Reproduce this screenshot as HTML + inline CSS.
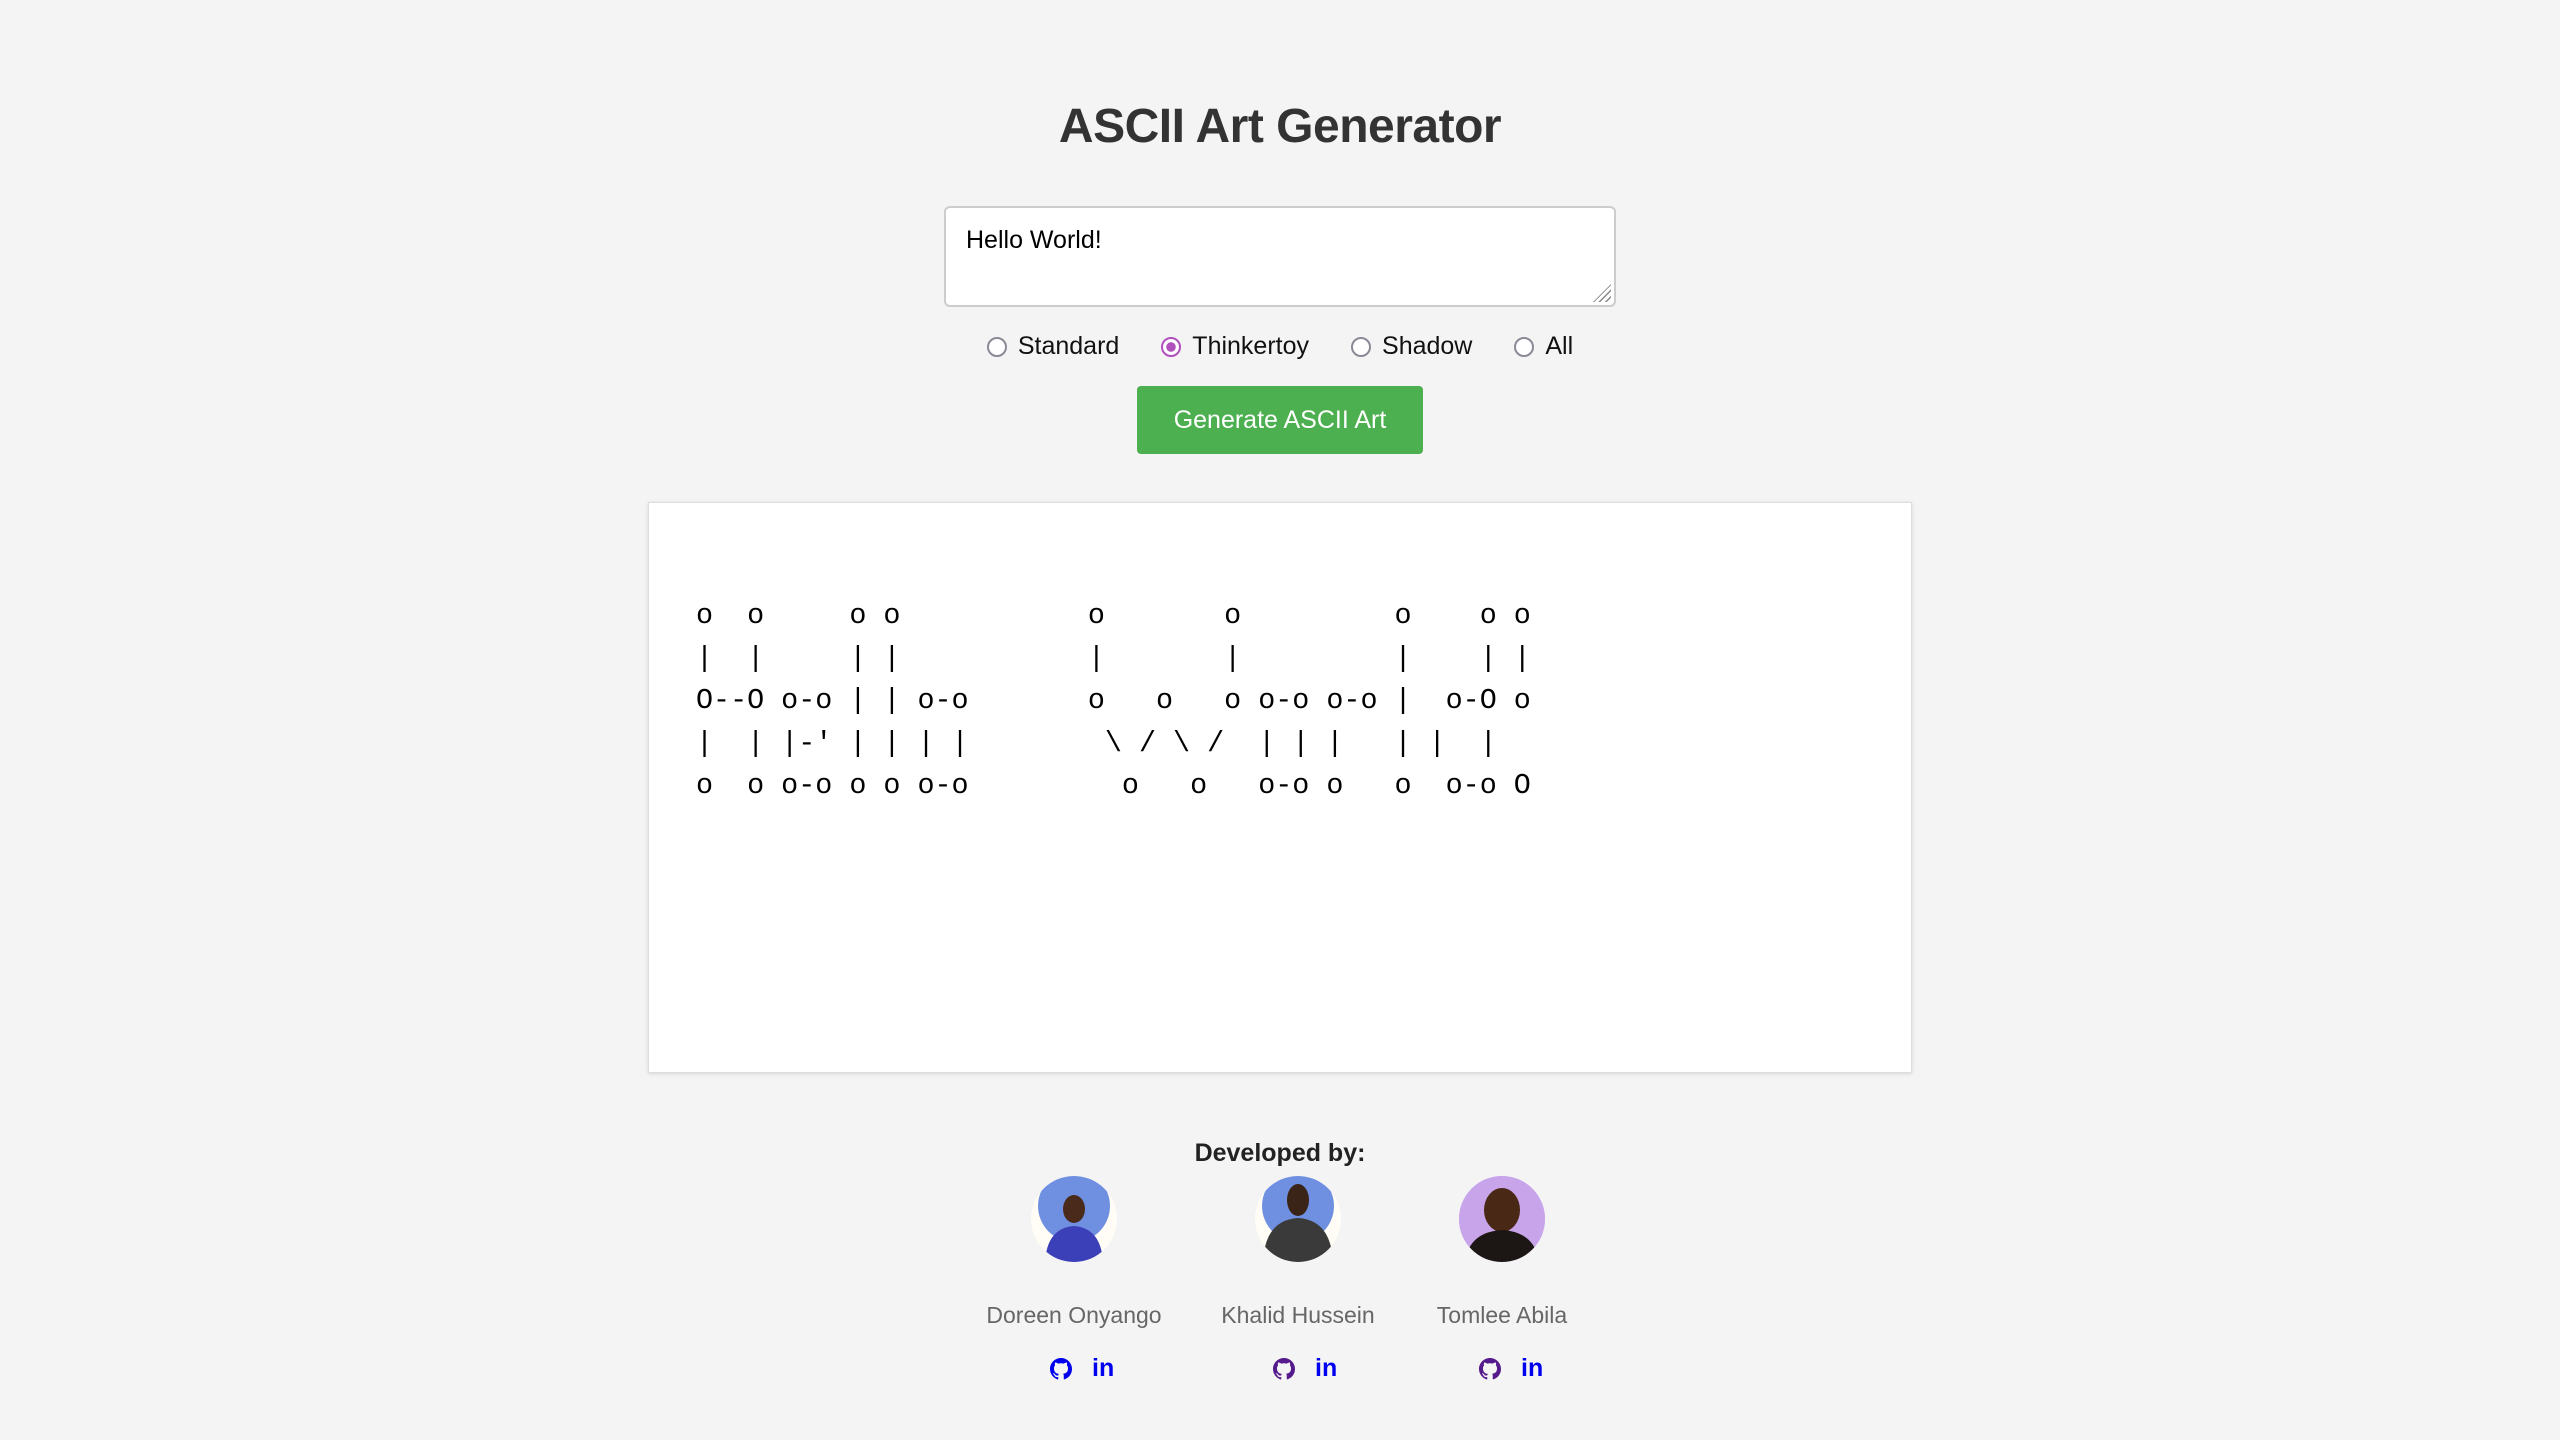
<!DOCTYPE html>
<html><head><meta charset="utf-8"><style>
*{box-sizing:border-box;margin:0;padding:0}
body{width:2560px;height:1440px;background:#f4f4f4;font-family:"Liberation Sans",sans-serif;position:relative;overflow:hidden;color:#333}
.abs{position:absolute}
h1{position:absolute;left:0;width:2560px;top:99px;text-align:center;font-size:48px;font-weight:bold;color:#333;letter-spacing:-0.5px}
.ta{left:944px;top:206px;width:672px;height:101px;background:#fff;border:2px solid #ccc;border-radius:6px;padding:18px 20px;font-size:25px;color:#000}
.grip{right:3px;bottom:3px;width:18px;height:18px;background:repeating-linear-gradient(135deg,transparent 0 3px,#888 3px 4.5px);clip-path:polygon(100% 0,100% 100%,0 100%)}
.radios{top:331px;left:0;width:2560px;text-align:center;font-size:25px;color:#111}
.r{display:inline-block;margin:0 21px;vertical-align:middle}
.c{display:inline-block;width:20px;height:20px;border:2.5px solid #8a8a96;border-radius:50%;vertical-align:-3px;margin-right:11px;background:#fff}
.c.on{border-color:#b24fbf;background:radial-gradient(circle,#b24fbf 0 4.5px,#fff 5px)}
.btn{left:1137px;top:386px;width:286px;height:68px;background:#4caf50;border-radius:4px;color:#fff;font-size:25px;text-align:center;line-height:68px}
.out{left:648px;top:502px;width:1264px;height:571px;background:#fff;border:1.5px solid #ddd;box-shadow:0 1px 4px rgba(0,0,0,.12)}
pre{position:absolute;left:696px;top:595px;font-family:"Liberation Mono",monospace;font-size:28.4px;line-height:42.6px;color:#000}
.dev{top:1139px;left:0;width:2560px;text-align:center;font-weight:bold;font-size:25px;color:#222}
.av{width:86px;height:86px;border-radius:50%;overflow:hidden;top:1176px}
.name{top:1302px;font-size:23px;color:#666;text-align:center;width:300px}
.in{font-weight:bold;color:#0000ee;font-size:25px;top:1354px}
</style></head><body>
<h1>ASCII Art Generator</h1>
<div class="abs ta">Hello World!<div class="abs grip"></div></div>
<div class="abs radios"><span class="r"><span class="c"></span>Standard</span><span class="r"><span class="c on"></span>Thinkertoy</span><span class="r"><span class="c"></span>Shadow</span><span class="r"><span class="c"></span>All</span></div>
<div class="abs btn">Generate ASCII Art</div>
<div class="abs out"></div>
<pre>o  o     o o           o       o         o    o o
|  |     | |           |       |         |    | |
O--O o-o | | o-o       o   o   o o-o o-o |  o-O o
|  | |-' | | | |        \ / \ /  | | |   | |  |
o  o o-o o o o-o         o   o   o-o o   o  o-o O</pre>
<div class="abs dev">Developed by:</div>

<div class="abs av" style="left:1031px;background:#fffdf5">
<svg width="86" height="86"><circle cx="43" cy="30" r="36" fill="#6f8fe0"/><ellipse cx="43" cy="33" rx="11" ry="14" fill="#4a2a1a"/><path d="M14 86 Q16 52 43 50 Q70 52 72 86Z" fill="#3b3fb8"/></svg></div>
<div class="abs av" style="left:1255px;background:#fffdf5">
<svg width="86" height="86"><circle cx="43" cy="30" r="36" fill="#6f8fe0"/><ellipse cx="43" cy="24" rx="11" ry="16" fill="#3a2418"/><path d="M8 86 Q10 44 43 42 Q76 44 78 86Z" fill="#3a3a3a"/></svg></div>
<div class="abs av" style="left:1459px;background:#c9a8e8">
<svg width="86" height="86"><rect width="86" height="86" fill="#c8a4ea"/><ellipse cx="43" cy="34" rx="18" ry="22" fill="#4a2816"/><path d="M6 86 Q10 56 43 54 Q76 56 80 86Z" fill="#1c1614"/></svg></div>

<div class="abs name" style="left:924px">Doreen Onyango</div>
<div class="abs name" style="left:1148px">Khalid Hussein</div>
<div class="abs name" style="left:1352px">Tomlee Abila</div>

<svg class="abs" style="left:1050px;top:1358px" width="22" height="22" viewBox="0 0 16 16"><path fill="#0000ee" d="M8 0C3.6 0 0 3.600 0 8c0 3.5 2.3 6.5 5.5 7.6.4.1.5-.2.5-.4v-1.4c-2.2.5-2.7-1-2.7-1-.4-.9-.9-1.2-.9-1.2-.7-.5.1-.5.1-.5.8.1 1.2.8 1.2.8.7 1.2 1.9.9 2.3.7.1-.5.3-.9.5-1.1-1.8-.2-3.6-.9-3.6-4 0-.9.3-1.6.8-2.1-.1-.2-.4-1 .1-2.1 0 0 .7-.2 2.2.8.6-.2 1.3-.3 2-.3s1.4.1 2 .3c1.5-1 2.2-.8 2.2-.8.4 1.1.2 1.9.1 2.1.5.6.8 1.3.8 2.1 0 3.1-1.9 3.7-3.6 3.9.3.3.5.8.5 1.5v2.2c0 .2.1.5.6.4C13.7 14.5 16 11.5 16 8c0-4.4-3.6-8-8-8z"/></svg>
<div class="abs in" style="left:1092px">in</div>
<svg class="abs" style="left:1273px;top:1358px" width="22" height="22" viewBox="0 0 16 16"><path fill="#551a8b" d="M8 0C3.6 0 0 3.6 0 8c0 3.5 2.3 6.5 5.5 7.6.4.1.5-.2.5-.4v-1.4c-2.2.5-2.7-1-2.7-1-.4-.9-.9-1.2-.9-1.2-.7-.5.1-.5.1-.5.8.1 1.2.8 1.2.8.7 1.2 1.9.9 2.3.7.1-.5.3-.9.5-1.1-1.8-.2-3.6-.9-3.6-4 0-.9.3-1.6.8-2.1-.1-.2-.4-1 .1-2.1 0 0 .7-.2 2.2.8.6-.2 1.3-.3 2-.3s1.4.1 2 .3c1.5-1 2.2-.8 2.2-.8.4 1.1.2 1.9.1 2.1.5.6.8 1.3.8 2.1 0 3.1-1.9 3.7-3.6 3.9.3.3.5.8.5 1.5v2.2c0 .2.1.5.6.4C13.7 14.5 16 11.5 16 8c0-4.4-3.6-8-8-8z"/></svg>
<div class="abs in" style="left:1315px">in</div>
<svg class="abs" style="left:1479px;top:1358px" width="22" height="22" viewBox="0 0 16 16"><path fill="#551a8b" d="M8 0C3.6 0 0 3.6 0 8c0 3.5 2.3 6.5 5.5 7.6.4.1.5-.2.5-.4v-1.4c-2.2.5-2.7-1-2.7-1-.4-.9-.9-1.2-.9-1.2-.7-.5.1-.5.1-.5.8.1 1.2.8 1.2.8.7 1.2 1.9.9 2.3.7.1-.5.3-.9.5-1.1-1.8-.2-3.6-.9-3.6-4 0-.9.3-1.6.8-2.1-.1-.2-.4-1 .1-2.1 0 0 .7-.2 2.2.8.6-.2 1.3-.3 2-.3s1.4.1 2 .3c1.5-1 2.2-.8 2.2-.8.4 1.1.2 1.9.1 2.1.5.6.8 1.3.8 2.1 0 3.1-1.9 3.7-3.6 3.9.3.3.5.8.5 1.5v2.2c0 .2.1.5.6.4C13.7 14.5 16 11.5 16 8c0-4.4-3.6-8-8-8z"/></svg>
<div class="abs in" style="left:1521px">in</div>
</body></html>
